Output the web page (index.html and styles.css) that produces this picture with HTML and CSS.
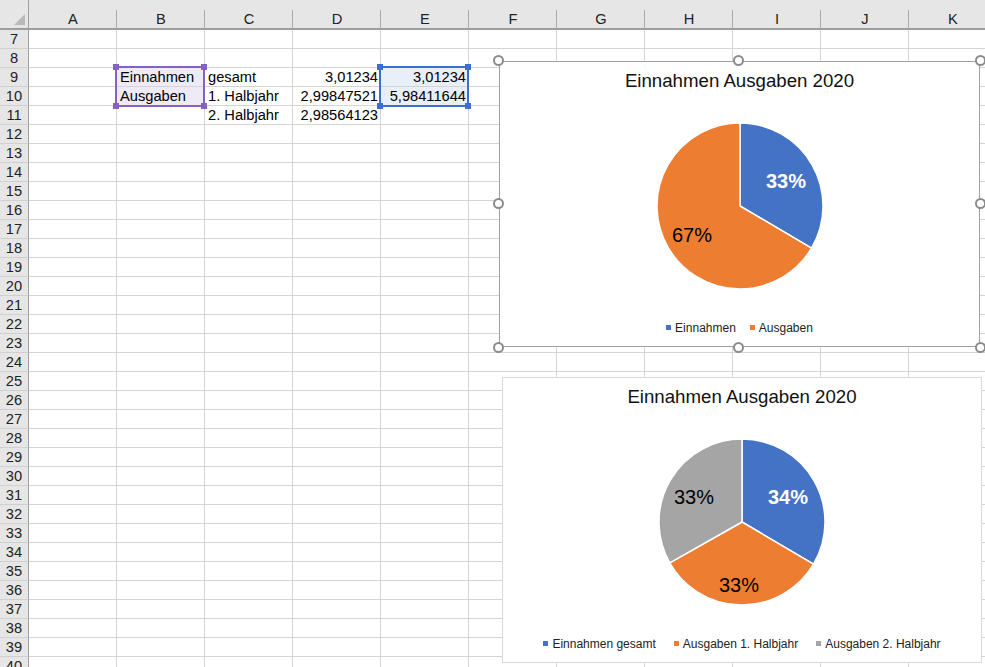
FILE: index.html
```html
<!DOCTYPE html>
<html lang="de">
<head>
    <meta charset="UTF-8">
    <meta name="viewport" content="width=device-width, initial-scale=1.0">
    <title>Einnahmen Ausgaben 2020</title>
    <link rel="stylesheet" href="styles.css">
</head>
<body>
    <div class="sheet">
        <!-- Cells are built by the script below -->
        <div class="grid" id="grid"></div>

        <!-- Range highlights of the chart sources -->
        <div class="range range-purple">
            <span class="dot tl"></span><span class="dot tr"></span>
            <span class="dot bl"></span><span class="dot br"></span>
        </div>
        <div class="range range-blue">
            <span class="dot tl"></span><span class="dot tr"></span>
            <span class="dot bl"></span><span class="dot br"></span>
        </div>

        <!-- Chart 1 (selected) -->
        <div class="chart chart-one selected">
            <div class="chart-title">Einnahmen Ausgaben 2020</div>
            <svg class="pie" viewBox="0 0 478 210" width="478" height="210">
                <path class="slice blue" d="M239,105 L239,22 A83,83 0 0,1 310.49,147.18 Z"/>
                <path class="slice orange" d="M239,105 L310.49,147.18 A83,83 0 1,1 239,22 Z"/>
                <text class="label light" x="285" y="80">33%</text>
                <text class="label" x="191" y="134">67%</text>
            </svg>
            <div class="legend">
                <span class="key"><i class="swatch blue"></i>Einnahmen</span>
                <span class="key"><i class="swatch orange"></i>Ausgaben</span>
            </div>
            <span class="handle h-tl"></span><span class="handle h-tc"></span><span class="handle h-tr"></span>
            <span class="handle h-ml"></span><span class="handle h-mr"></span>
            <span class="handle h-bl"></span><span class="handle h-bc"></span><span class="handle h-br"></span>
        </div>

        <!-- Chart 2 -->
        <div class="chart chart-two">
            <div class="chart-title">Einnahmen Ausgaben 2020</div>
            <svg class="pie" viewBox="0 0 478 210" width="478" height="210">
                <path class="slice blue" d="M239,105 L239,22 A83,83 0 0,1 310.49,147.18 Z"/>
                <path class="slice orange" d="M239,105 L310.49,147.18 A83,83 0 0,1 166.74,145.84 Z"/>
                <path class="slice gray" d="M239,105 L166.74,145.84 A83,83 0 0,1 239,22 Z"/>
                <text class="label light" x="285" y="80">34%</text>
                <text class="label" x="236" y="168">33%</text>
                <text class="label" x="191" y="80">33%</text>
            </svg>
            <div class="legend wide">
                <span class="key"><i class="swatch blue"></i>Einnahmen gesamt</span>
                <span class="key"><i class="swatch orange"></i>Ausgaben 1. Halbjahr</span>
                <span class="key"><i class="swatch gray"></i>Ausgaben 2. Halbjahr</span>
            </div>
        </div>
    </div>

    <script>
        const cols = ['A', 'B', 'C', 'D', 'E', 'F', 'G', 'H', 'I', 'J', 'K'];
        const data = {
            B9: ['Einnahmen', 'pick'],
            B10: ['Ausgaben', 'pick'],
            C9: ['gesamt'],
            C10: ['1. Halbjahr'],
            C11: ['2. Halbjahr'],
            D9: ['3,01234', 'num'],
            D10: ['2,99847521', 'num'],
            D11: ['2,98564123', 'num'],
            E9: ['3,01234', 'num sel'],
            E10: ['5,98411644', 'num sel']
        };
        const grid = document.getElementById('grid');

        function addCell(cls, text) {
            const div = document.createElement('div');
            div.className = cls;
            if (text) div.textContent = text;
            grid.appendChild(div);
        }

        addCell('corner');
        cols.forEach(c => addCell('col-head', c));

        for (let r = 7; r <= 40; r++) {
            addCell('row-head', String(r));
            cols.forEach(c => {
                const entry = data[c + r];
                if (entry) {
                    addCell('cell ' + (entry[1] || ''), entry[0]);
                } else {
                    addCell('cell');
                }
            });
        }
    </script>
</body>
</html>
```

FILE: styles.css
```css
body {
    margin: 0;
    font-family: "Liberation Sans", Arial, sans-serif;
    background: #ffffff;
}
.sheet {
    position: relative;
    width: 985px;
    height: 667px;
    overflow: hidden;
}
.grid {
    display: grid;
    grid-template-columns: 29px repeat(11, 88px);
    grid-template-rows: 30px;
    grid-auto-rows: 19px;
    font-size: 14.67px;
    color: #000;
}
.corner,
.col-head,
.row-head {
    background: #e6e6e6;
    box-sizing: border-box;
}
.corner {
    position: relative;
    border-right: 1px solid #9e9e9e;
    border-bottom: 2px solid #9e9e9e;
}
.corner::after {
    content: "";
    position: absolute;
    left: 14px;
    top: 14px;
    width: 11px;
    height: 11px;
    background: #b9b9b9;
    clip-path: polygon(100% 0, 100% 100%, 0 100%);
}
.col-head {
    position: relative;
    border-bottom: 2px solid #9e9e9e;
    padding-top: 10px;
    line-height: 18px;
    text-align: center;
    color: #222;
}
.col-head::after {
    content: "";
    position: absolute;
    right: 0;
    top: 10px;
    bottom: 0;
    width: 1px;
    background: #ababab;
}
.row-head {
    border-right: 1px solid #9e9e9e;
    border-bottom: 1px solid #d0d0d0;
    line-height: 18px;
    text-align: center;
    color: #222;
}
.cell {
    box-sizing: border-box;
    border-right: 1px solid #d4d4d4;
    border-bottom: 1px solid #d4d4d4;
    padding: 0 3px;
    line-height: 18px;
    white-space: nowrap;
}
.num {
    text-align: right;
    padding-right: 2px;
}
.pick {
    background: #eeeaf6;
}
.sel {
    background: #e9eff9;
}

/* range highlights */
.range {
    position: absolute;
    top: 66px;
    width: 90px;
    height: 41px;
    box-sizing: border-box;
    border: 2px solid;
}
.range-purple {
    left: 115px;
    border-color: #8562c0;
    color: #8562c0;
}
.range-blue {
    left: 379px;
    border-color: #3b6fc8;
    color: #3b6fc8;
}
.dot {
    position: absolute;
    width: 6px;
    height: 6px;
    background: currentColor;
}
.dot.tl { left: -4px; top: -4px; }
.dot.tr { right: -4px; top: -4px; }
.dot.bl { left: -4px; bottom: -4px; }
.dot.br { right: -4px; bottom: -4px; }

/* charts */
.chart {
    position: absolute;
    width: 480px;
    height: 286px;
    box-sizing: border-box;
    background: #ffffff;
    border: 1px solid #d9d9d9;
    display: flex;
    flex-direction: column;
    align-items: center;
}
.chart-one {
    left: 499px;
    top: 61px;
    width: 481px;
    border-color: #a0a0a0;
}
.chart-two {
    left: 502px;
    top: 377px;
}
.chart-title {
    height: 39px;
    padding-top: 8px;
    box-sizing: border-box;
    font-size: 18.67px;
    line-height: 22px;
    color: #111;
}
.pie {
    display: block;
}
.slice {
    stroke: #ffffff;
    stroke-width: 1.5;
    stroke-linejoin: round;
}
.slice.blue { fill: #4472c4; }
.slice.orange { fill: #ed7d31; }
.slice.gray { fill: #a5a5a5; }
.label {
    font-family: "Liberation Sans", Arial, sans-serif;
    font-size: 20px;
    text-anchor: middle;
    dominant-baseline: central;
    fill: #000;
}
.label.light {
    fill: #ffffff;
    font-weight: bold;
}
.legend {
    flex: 1;
    display: flex;
    align-items: center;
    justify-content: center;
    gap: 14px;
    font-size: 12px;
    color: #222;
    padding-bottom: 2px;
}
.legend.wide {
    gap: 18px;
}
.key {
    display: flex;
    align-items: center;
    gap: 4px;
}
.swatch {
    width: 5px;
    height: 5px;
}
.swatch.blue { background: #4472c4; }
.swatch.orange { background: #ed7d31; }
.swatch.gray { background: #a5a5a5; }

/* selection handles */
.handle {
    position: absolute;
    width: 11px;
    height: 11px;
    box-sizing: border-box;
    border: 2px solid #8c8c8c;
    border-radius: 50%;
    background: #ffffff;
}
.h-tl { left: -7px; top: -7px; }
.h-tc { left: 233px; top: -7px; }
.h-tr { right: -7px; top: -7px; }
.h-ml { left: -7px; top: 136px; }
.h-mr { right: -7px; top: 136px; }
.h-bl { left: -7px; bottom: -7px; }
.h-bc { left: 233px; bottom: -7px; }
.h-br { right: -7px; bottom: -7px; }
```
